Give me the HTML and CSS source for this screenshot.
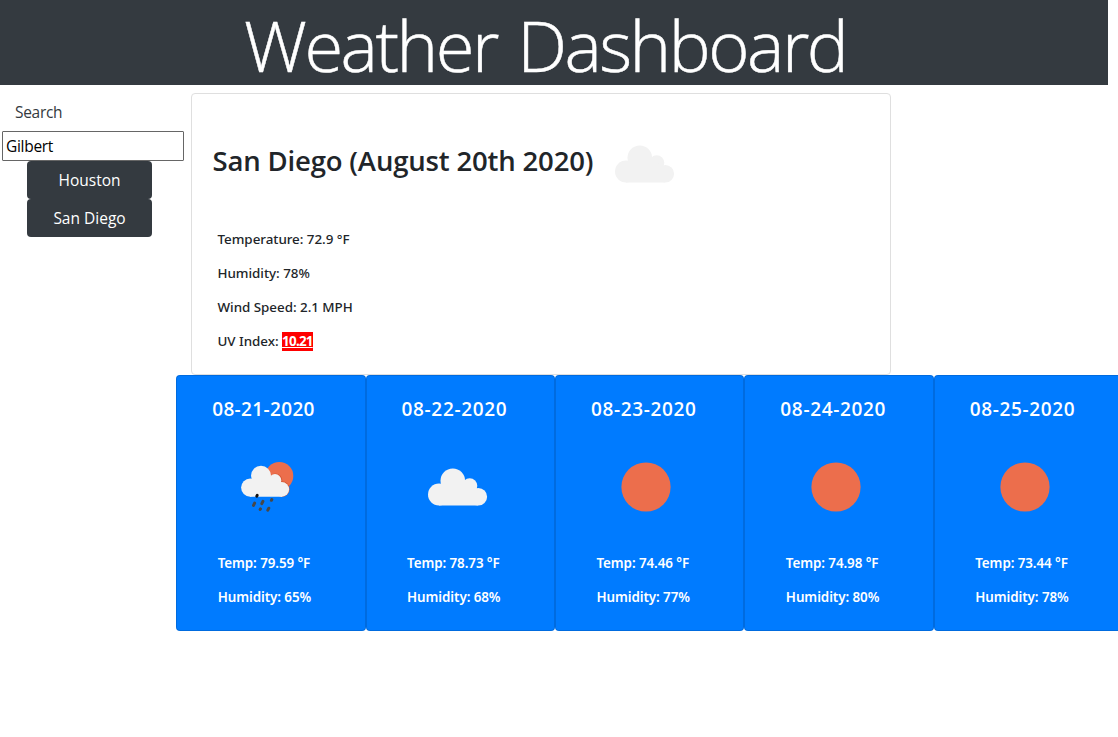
FILE: index.html
```html
<!DOCTYPE html>
<html lang="en">
<head>
<meta charset="utf-8">
<title>Weather Dashboard</title>
<link rel="stylesheet" href="styles.css">
</head>
<body>
<svg class="defs" width="0" height="0">
  <symbol id="cloud" viewBox="0 0 60 38">
    <g fill="#f2f2f2">
      <circle cx="11" cy="26.500" r="11"/><circle cx="24.800" cy="12.800" r="12.300"/><circle cx="41.700" cy="17.800" r="7.600"/><circle cx="50.300" cy="28.800" r="8.800"/>
      <path d="M11 16H38L50 21V37.500H11Z"/>
    </g>
  </symbol>
  <symbol id="sun" viewBox="0 0 50 50"><circle cx="25" cy="25" r="24.600" fill="#ec6e4c"/></symbol>
  <symbol id="rain" viewBox="0 0 54 52">
    <circle cx="38.300" cy="15" r="14" fill="#ec6e4c"/>
    <circle cx="34.500" cy="19.200" r="6.700" fill="#d65a38"/><circle cx="41" cy="28" r="7.700" fill="#d65a38"/>
    <g fill="#f2f2f2">
      <circle cx="9.200" cy="26.600" r="9.100"/><circle cx="20" cy="14.700" r="10"/><circle cx="34" cy="19.400" r="6.300"/><circle cx="40.800" cy="28.400" r="7.300"/>
      <path d="M9 18H31L41 22V35.700H9Z"/>
    </g>
    <g stroke="#484848" stroke-width="3" stroke-linecap="round">
      <path d="M16.200 34.400l-.4 .8" stroke="#111"/>
      <path d="M13.600 42.100l-1.100 2.300M21.900 40.300l-1.100 2.300M30.800 38.500l-.4 .8M19.500 47.900l-.4 .6M27.800 47.200l-1 2"/>
    </g>
  </symbol>
</svg>
<header class="banner"><h1 class="title">Weather Dashboard</h1></header>
<main class="layout">
  <aside class="sidebar">
    <label class="label" for="city">Search</label>
    <input class="search" id="city" value="Gilbert">
    <button class="city">Houston</button>
    <button class="city">San Diego</button>
  </aside>
  <section class="content">
    <article class="current">
      <div class="heading">
        <h2 class="place">San Diego (August 20th 2020)</h2>
        <svg class="cloud"><use href="#cloud"/></svg>
      </div>
      <p class="stat">Temperature: 72.9 °F</p>
      <p class="stat">Humidity: 78%</p>
      <p class="stat">Wind Speed: 2.1 MPH</p>
      <p class="stat">UV Index: <span class="uv">10.21</span></p>
    </article>
    <div class="forecast">
      <article class="day"><h3 class="date">08-21-2020</h3><div class="icon"><svg class="rain"><use href="#rain"/></svg></div><p class="stat">Temp: 79.59 °F</p><p class="stat">Humidity: 65%</p></article>
      <article class="day"><h3 class="date">08-22-2020</h3><div class="icon"><svg class="cloud"><use href="#cloud"/></svg></div><p class="stat">Temp: 78.73 °F</p><p class="stat">Humidity: 68%</p></article>
      <article class="day"><h3 class="date">08-23-2020</h3><div class="icon"><svg class="sun"><use href="#sun"/></svg></div><p class="stat">Temp: 74.46 °F</p><p class="stat">Humidity: 77%</p></article>
      <article class="day"><h3 class="date">08-24-2020</h3><div class="icon"><svg class="sun"><use href="#sun"/></svg></div><p class="stat">Temp: 74.98 °F</p><p class="stat">Humidity: 80%</p></article>
      <article class="day"><h3 class="date">08-25-2020</h3><div class="icon"><svg class="sun"><use href="#sun"/></svg></div><p class="stat">Temp: 73.44 °F</p><p class="stat">Humidity: 78%</p></article>
    </div>
  </section>
</main>
</body>
</html>
```
FILE: styles.css
```css
* { box-sizing: border-box; }
body { margin: 0; overflow: hidden; background: #fff; color: #212529; font: 400 16px/24px "Open Sans", "Noto Sans", sans-serif; }
h1, h2, h3, p { margin: 0; white-space: nowrap; }
.defs { display: block; height: 0; }
.banner { width: 1108px; height: 85px; background: #343a40; color: #fff; padding: 5px 0 0 244px; }
.title { font-size: 70.5px; line-height: 80px; font-weight: 300; letter-spacing: -2.5px; word-spacing: 4.5px; -webkit-text-stroke: .5px #fff; }
.layout { display: flex; }
.sidebar { flex: none; width: 176px; display: flex; flex-direction: column; padding-top: 15px; }
.label { padding-left: 15px; font-size: 15.5px; height: 31px; letter-spacing: -.3px; color: #343a40; }
.search { width: 182px; height: 30px; margin-left: 2px; padding: 1px 3px; border: 1px solid #666; border-radius: 1px; color: #000; font: 400 15.500px "Open Sans", sans-serif; letter-spacing: -.3px; }
.city { width: 125px; height: 38px; margin-left: 27px; padding: 0; border: 0; border-radius: 4px; background: #343a40; color: #fff; font: 400 15.500px/38px "Open Sans", sans-serif; letter-spacing: 0; }
.content { flex: none; width: 948px; padding-top: 8px; }
.current { width: 700px; height: 282px; margin-left: 15px; padding-top: 42px; border: 1px solid #dfdfdf; border-radius: 4px; }
.heading { display: flex; height: 86px; padding-left: 20.5px; }
.place { width: 402.5px; font-size: 27.500px; line-height: 50px; font-weight: 600; letter-spacing: -.17px; }
.cloud { width: 60px; height: 38px; flex: none; }
.heading .cloud { margin-top: 9px; }
.stat { height: 34px; padding-left: 25.5px; font: 500 13.400px/34px "Noto Sans", "Open Sans", sans-serif; letter-spacing: -.03px; }
.uv { display: inline-block; height: 19px; line-height: 19px; background: #f00; color: #fff; font-weight: 700; letter-spacing: -.75px; text-decoration: underline; }
.forecast { display: flex; padding-left: .2px; }
.day { flex: none; width: 189.400px; height: 256px; border: 1px solid rgba(0,0,0,.125); border-radius: 4px; background: #007bff; color: #fff; padding: 19px 0 0 15px; }
.date { padding-left: 20px; font-size: 19px; line-height: 28px; font-weight: 600; letter-spacing: .65px; }
.day:first-child .date { letter-spacing: .35px; }
.icon { height: 123px; padding: 38px 0 0 49px; }
.day .stat { font-weight: 600; letter-spacing: -.08px; }
.icon svg { display: block; }
.icon .cloud { margin: 7px 0 0 -2.5px; }
.rain { width: 54px; height: 52px; }
.sun { width: 50px; height: 50px; margin: 1px 0 0 1.3px; }
```
